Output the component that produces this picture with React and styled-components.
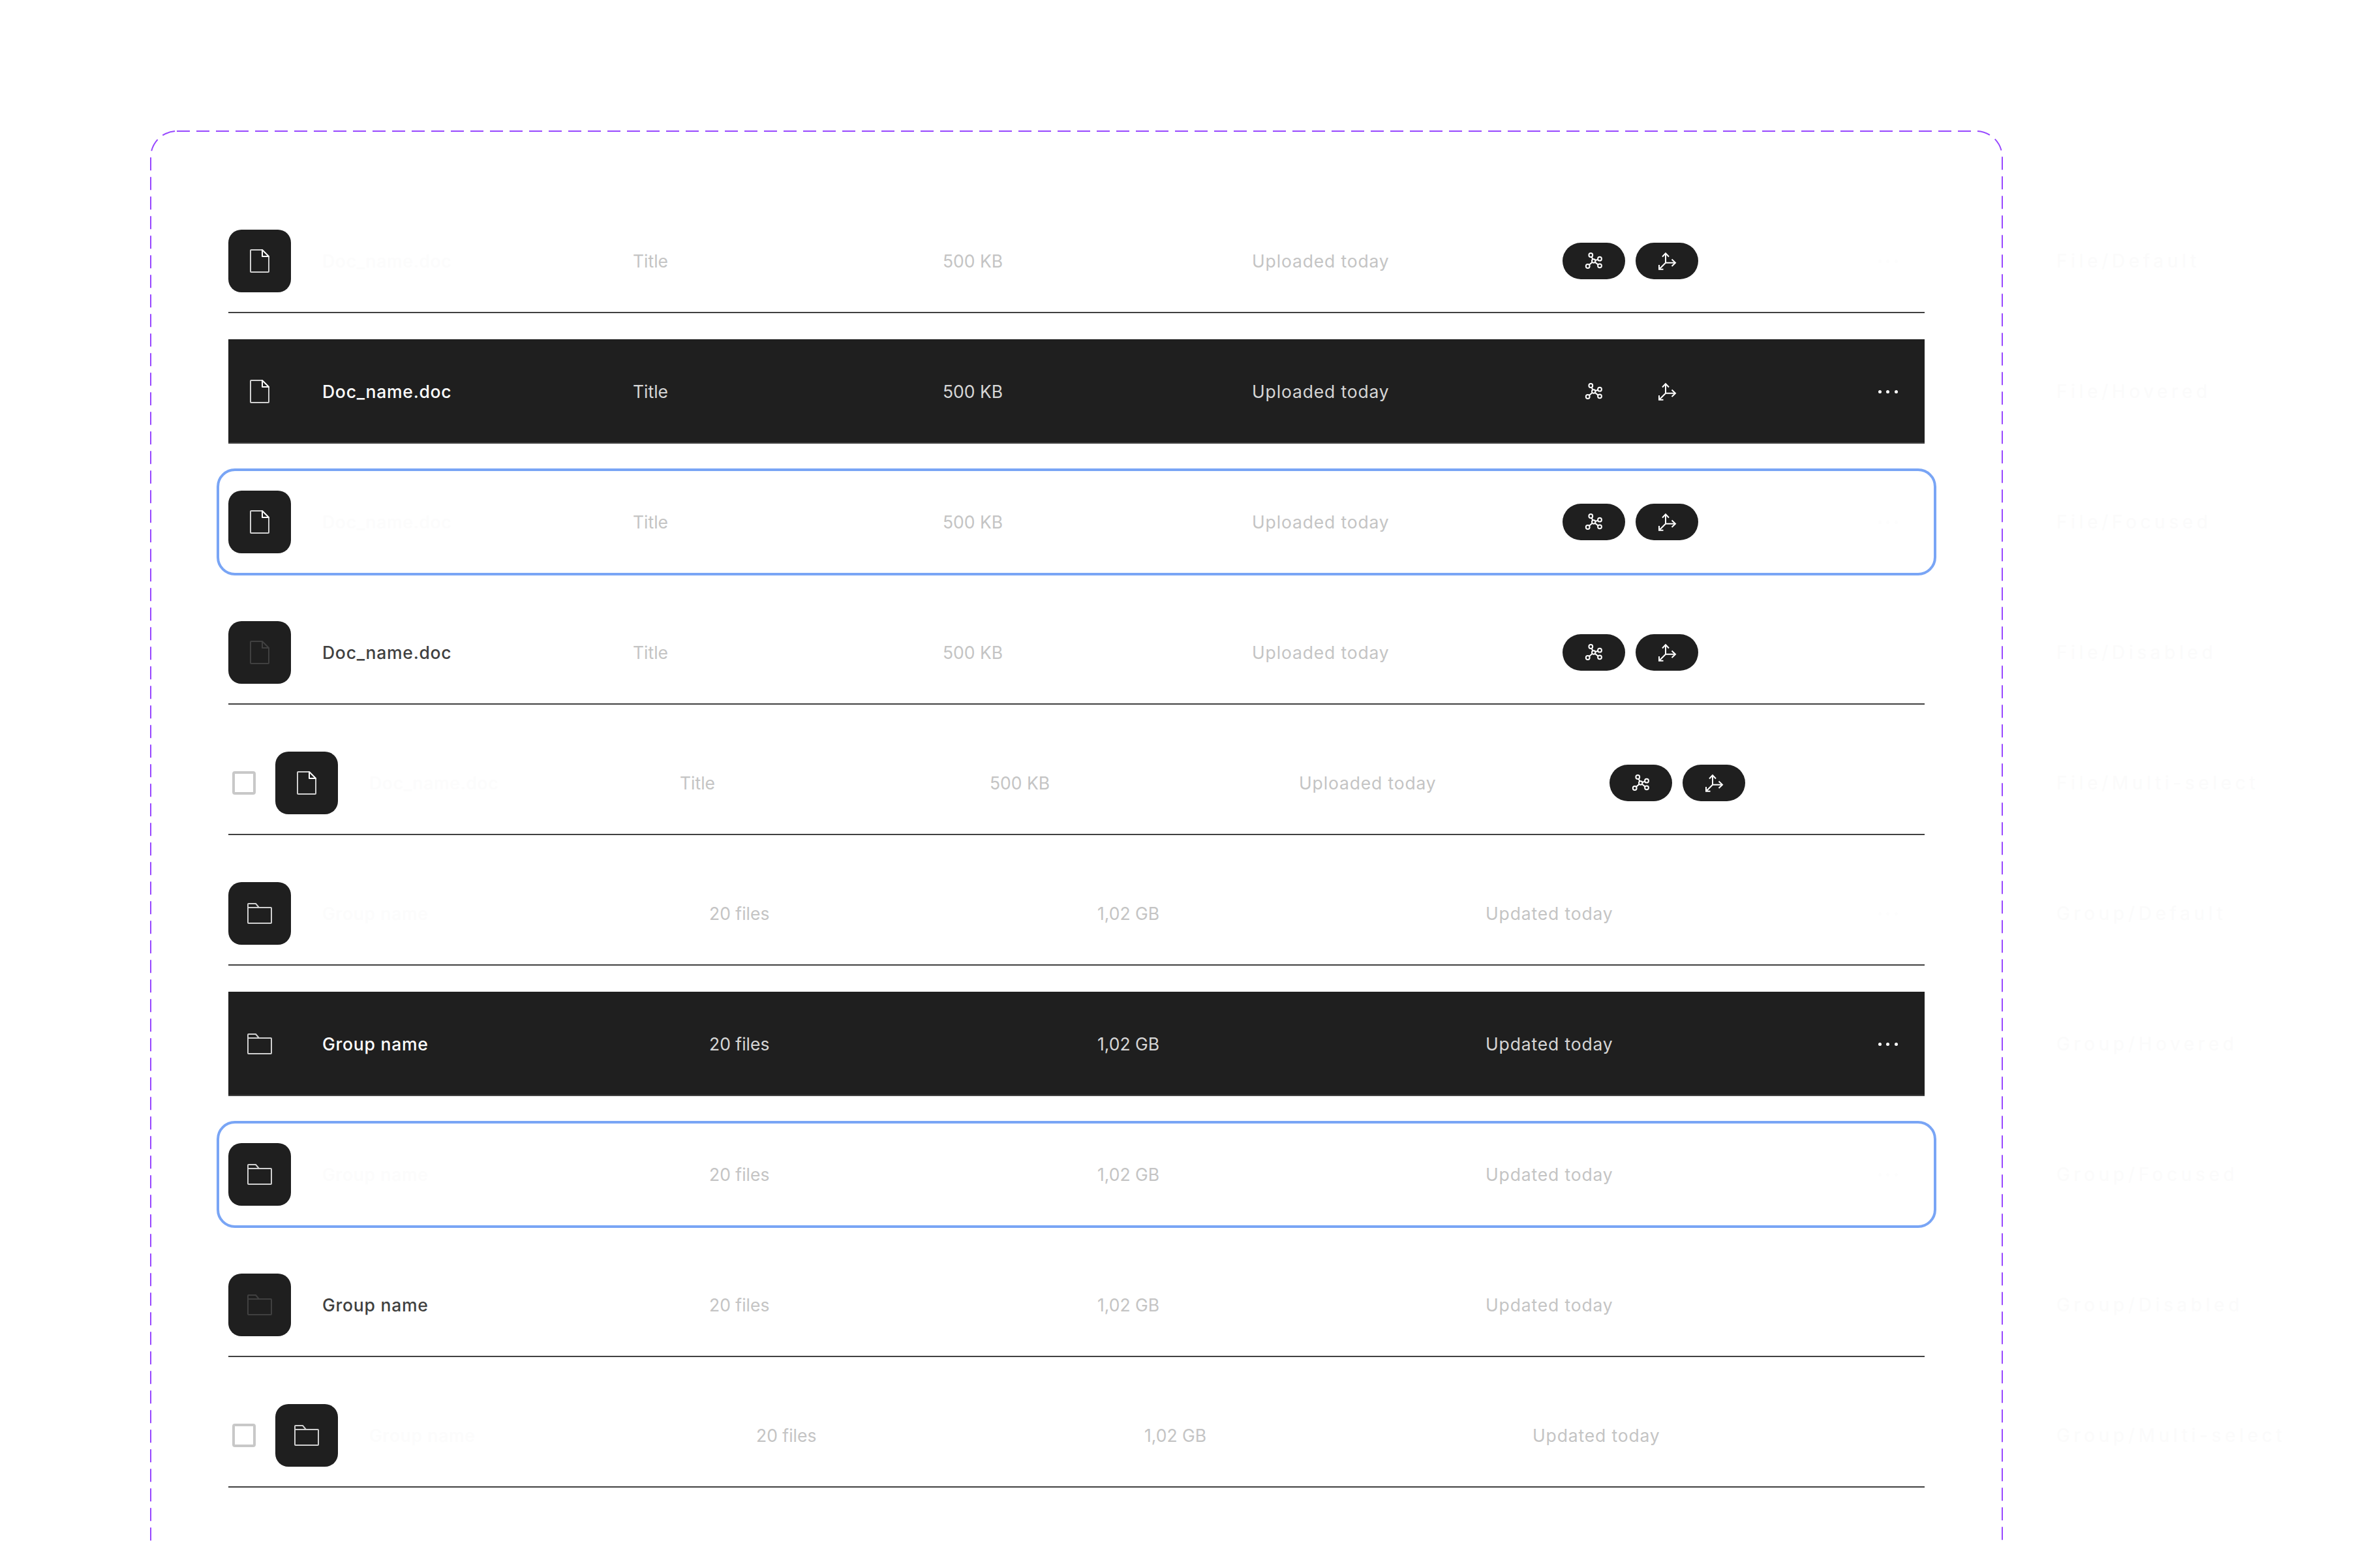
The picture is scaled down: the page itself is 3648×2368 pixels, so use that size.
import React from 'react';
import styled, { createGlobalStyle } from 'styled-components';

const GlobalStyle = createGlobalStyle`
  html, body {
    margin: 0;
    background: #ffffff;
  }
  body {
    font-family: "Inter", "Liberation Sans", sans-serif;
  }
`;

const Page = styled.div`
  display: flex;
  align-items: flex-start;
  gap: 82px;
  box-sizing: border-box;
  height: 2368px;
  padding: 200px 0 0 230px;
  overflow: hidden;
`;

const Frame = styled.div`
  position: relative;
  display: flex;
  flex-direction: column;
  gap: 40px;
  flex: none;
  box-sizing: border-box;
  width: 2840px;
  height: 2400px;
  padding: 120px;
`;

const FrameOutline = styled.svg`
  position: absolute;
  top: 0;
  left: 0;
  pointer-events: none;
`;

const Row = styled.div`
  position: relative;
  display: flex;
  align-items: center;
  height: 160px;
  font-size: 26.5px;
  color: #c4c4c4;
  background: ${(p) => (p.$state === 'hovered' ? '#1f1f1f' : 'transparent')};
  box-shadow: ${(p) => (p.$state === 'focused' ? 'none' : 'inset 0 -2px 0 #404040')};

  ${(p) =>
    p.$state === 'hovered' &&
    `
    color: #d6d6d6;
  `}

  ${(p) =>
    p.$state === 'focused' &&
    `
    &::after {
      content: '';
      position: absolute;
      inset: -2px -18px;
      border: 4px solid #79a5f5;
      border-radius: 28px;
      pointer-events: none;
    }
  `}
`;

const Checkbox = styled.span`
  flex: none;
  box-sizing: border-box;
  width: 36px;
  height: 36px;
  margin: 0 30px 0 6px;
  border: 4px solid #c8c8c8;
  border-radius: 4px;
`;

const Tile = styled.div`
  display: flex;
  align-items: center;
  justify-content: center;
  flex: none;
  width: 96px;
  height: 96px;
  margin-right: 48px;
  border-radius: 20px;
  background: ${(p) => (p.$bare ? 'transparent' : '#1f1f1f')};
`;

const Name = styled.div`
  flex: none;
  width: ${(p) => p.$width}px;
  font-weight: 500;
  letter-spacing: 0.75px;
  white-space: nowrap;
  color: ${(p) =>
    p.$state === 'hovered' ? '#ffffff' : p.$state === 'disabled' ? '#404040' : '#fcfcfc'};
`;

const Cell = styled.div`
  flex: none;
  width: ${(p) => p.$width}px;
  letter-spacing: ${(p) => (p.$wide ? '0.85px' : '0')};
  white-space: nowrap;
`;

const Actions = styled.div`
  display: flex;
  gap: 16px;
  flex: none;
`;

const ActionButton = styled.div`
  display: flex;
  align-items: center;
  justify-content: center;
  width: 96px;
  height: 56px;
  border-radius: 28px;
  background: ${(p) => (p.$bare ? 'transparent' : '#1f1f1f')};
`;

const More = styled.div`
  display: flex;
  gap: 7.67px;
  margin-left: auto;
  margin-right: 41px;
`;

const Dot = styled.span`
  width: 5px;
  height: 5px;
  border-radius: 50%;
  background: ${(p) => (p.$state === 'hovered' ? '#ffffff' : '#fdfdfd')};
`;

const Labels = styled.div`
  display: flex;
  flex-direction: column;
  gap: 40px;
  flex: none;
  padding-top: 120px;
`;

const Label = styled.div`
  display: flex;
  align-items: center;
  height: 160px;
  font-size: 28px;
  letter-spacing: 5.7px;
  white-space: nowrap;
  color: #fbfbfb;
`;

const FileIcon = ({ muted }) => {
  const line = muted ? '#404040' : '#d0d0d0';
  const fold = muted ? '#404040' : '#ffffff';
  return (
    <svg width="48" height="48" viewBox="0 0 48 48" fill="none" strokeWidth="2">
      <path d="M28 7H11a1 1 0 0 0-1 1v32a1 1 0 0 0 1 1h26a1 1 0 0 0 1-1V17" stroke={line} />
      <path d="M28 7v10h10z" stroke={fold} strokeLinejoin="round" />
    </svg>
  );
};

const FolderIcon = ({ muted }) => {
  const line = muted ? '#404040' : '#d0d0d0';
  return (
    <svg width="48" height="48" viewBox="0 0 48 48" fill="none" stroke={line} strokeWidth="2">
      <path d="M6 15v-5a1 1 0 0 1 1-1h11l5 6h18a1 1 0 0 1 1 1v22a1 1 0 0 1-1 1H7a1 1 0 0 1-1-1V15h17" />
    </svg>
  );
};

const HubIcon = () => (
  <svg width="32" height="32" viewBox="0 0 32 32" fill="none" stroke="#ffffff" strokeWidth="2">
    <circle cx="15.7" cy="16" r="2.7" />
    <circle cx="11.3" cy="7" r="2.9" />
    <circle cx="25" cy="12.7" r="2.9" />
    <circle cx="25" cy="23.3" r="2.9" />
    <circle cx="6.7" cy="24" r="2.9" />
    <path d="M12.5 9.7l2 3.8M22.3 13.8l-4.2 1.2M22.6 21.6l-4.9-3.8M8.8 22l4.9-4.2" />
  </svg>
);

const AxisIcon = () => (
  <svg width="32" height="32" viewBox="0 0 32 32" fill="none" stroke="#ffffff" strokeWidth="2">
    <path d="M14 5v13.7H28M14 18.7L5 27.7" />
    <path d="M9 9.5l5-5.2 5 5.2M23.5 13.5l5.5 5.2-5.5 5.3M4 22v6.7h6.5" />
  </svg>
);

const files = [
  { state: 'default', label: 'File/Default' },
  { state: 'hovered', label: 'File/Hovered' },
  { state: 'focused', label: 'File/Focused' },
  { state: 'disabled', label: 'File/Disabled' },
  { state: 'select', label: 'File/Multi-select' },
];

const groups = [
  { state: 'default', label: 'Group/Default' },
  { state: 'hovered', label: 'Group/Hovered' },
  { state: 'focused', label: 'Group/Focused' },
  { state: 'disabled', label: 'Group/Disabled' },
  { state: 'select', label: 'Group/Multi-select' },
];

const MoreDots = ({ state }) => (
  <More>
    <Dot $state={state} />
    <Dot $state={state} />
    <Dot $state={state} />
  </More>
);

const FileRow = ({ state }) => {
  const hovered = state === 'hovered';
  return (
    <Row $state={state}>
      {state === 'select' && <Checkbox />}
      <Tile $bare={hovered}>
        <FileIcon muted={state === 'disabled'} />
      </Tile>
      <Name $state={state} $width={476}>Doc_name.doc</Name>
      <Cell $width={475}>Title</Cell>
      <Cell $width={474}>500 KB</Cell>
      <Cell $width={476} $wide>Uploaded today</Cell>
      <Actions>
        <ActionButton $bare={hovered}>
          <HubIcon />
        </ActionButton>
        <ActionButton $bare={hovered}>
          <AxisIcon />
        </ActionButton>
      </Actions>
      {state !== 'select' && state !== 'disabled' && <MoreDots state={state} />}
    </Row>
  );
};

const GroupRow = ({ state }) => (
  <Row $state={state}>
    {state === 'select' && <Checkbox />}
    <Tile $bare={state === 'hovered'}>
      <FolderIcon muted={state === 'disabled'} />
    </Tile>
    <Name $state={state} $width={593}>Group name</Name>
    <Cell $width={595}>20 files</Cell>
    <Cell $width={595}>1,02 GB</Cell>
    <Cell $width={300} $wide>Updated today</Cell>
    {state !== 'select' && state !== 'disabled' && <MoreDots state={state} />}
  </Row>
);

const App = () => (
  <>
    <GlobalStyle />
    <Page>
      <Frame>
        <FrameOutline width="2840" height="2400" fill="none">
          <rect
            x="1"
            y="1"
            width="2838"
            height="2398"
            rx="40"
            stroke="#9747ff"
            strokeWidth="2"
            strokeDasharray="20 10"
          />
        </FrameOutline>
        {files.map((f) => (
          <FileRow key={f.label} state={f.state} />
        ))}
        {groups.map((g) => (
          <GroupRow key={g.label} state={g.state} />
        ))}
      </Frame>
      <Labels>
        {[...files, ...groups].map((item) => (
          <Label key={item.label}>{item.label}</Label>
        ))}
      </Labels>
    </Page>
  </>
);

export default App;
